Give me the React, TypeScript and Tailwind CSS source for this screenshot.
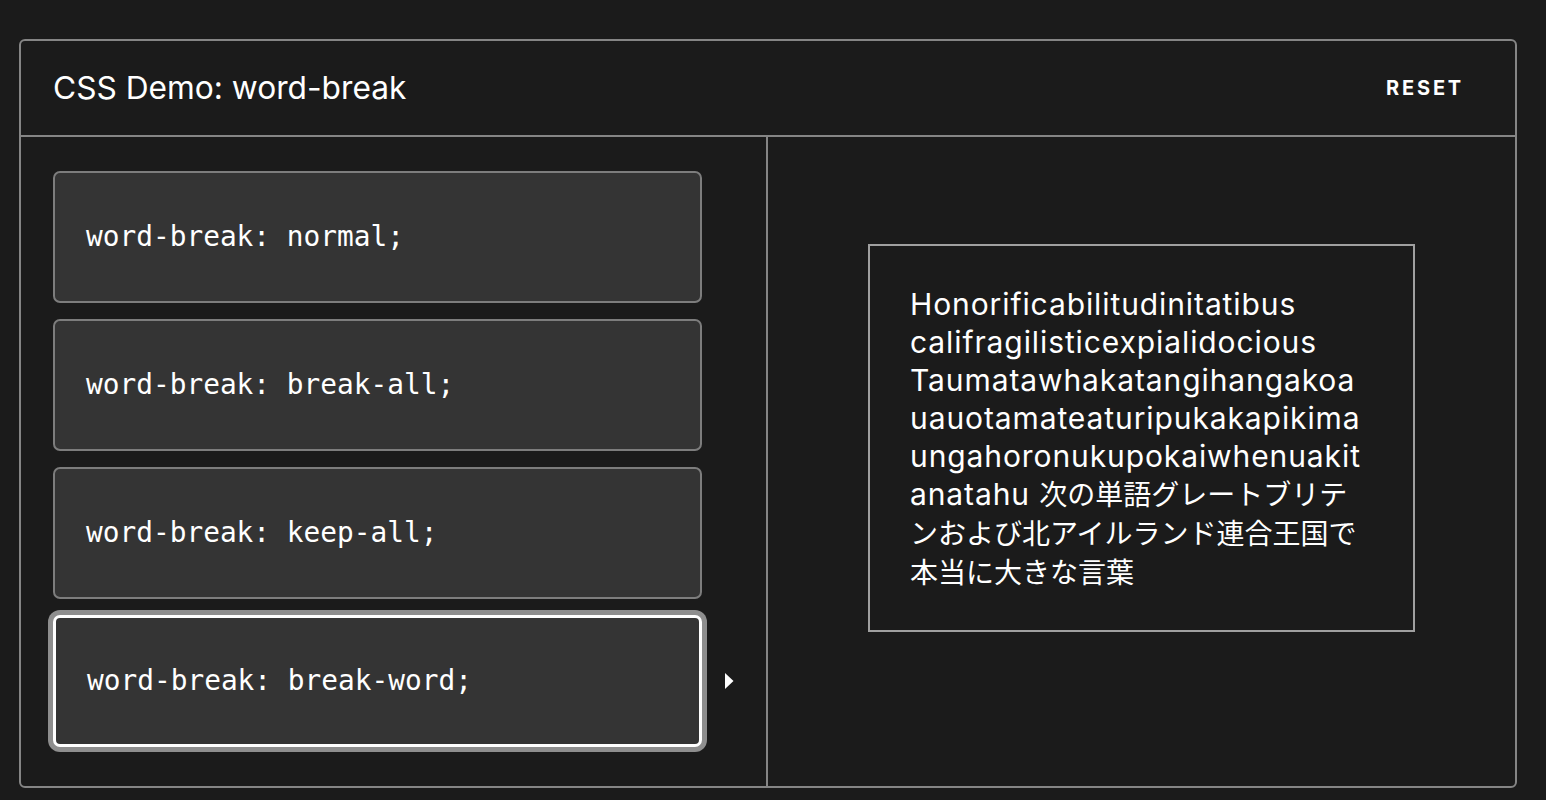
const options = [
  'word-break: normal;',
  'word-break: break-all;',
  'word-break: keep-all;',
  'word-break: break-word;',
];

const selected = 3;

export default function App() {
  return (
    <div className="min-h-[800px] bg-[#1b1b1b] pl-[19px] pt-[39px] font-['Inter','Noto_Sans_CJK_JP',sans-serif] text-white">
      <div className="w-[1498px] overflow-hidden rounded-[6px] border-2 border-[#858585]">
        {/* Header */}
        <div className="flex h-[96px] items-center justify-between border-b-2 border-[#858585] pl-[32px] pr-[51px]">
          <h1 className="text-[31.7px] leading-none">CSS Demo: word-break</h1>
          <button className="text-[20px] font-bold tracking-[0.14em]">RESET</button>
        </div>

        <div className="grid grid-cols-2">
          {/* Choices */}
          <div className="flex flex-col gap-4 border-r-2 border-[#858585] pt-[34px] pb-[39px] pl-[32px]">
            {options.map((o, i) => (
              <div key={o} className="flex items-center">
                <div
                  className={
                    i === selected
                      ? 'flex h-[132px] w-[649px] items-center rounded-[7px] border-[3px] border-white bg-[#343434] pl-[31px] shadow-[0_0_0_5px_#8e8e8e]'
                      : 'flex h-[132px] w-[649px] items-center rounded-[7px] border-2 border-[#7d7d7d] bg-[#343434] pl-[31px]'
                  }
                >
                  <code className="font-['DejaVu_Sans_Mono',monospace] text-[27.8px]">{o}</code>
                </div>
                {i === selected && (
                  <svg width="9" height="16" viewBox="0 0 9 16" className="ml-[23px]">
                    <path d="M0 0 L8.5 8 L0 16 Z" fill="white" />
                  </svg>
                )}
              </div>
            ))}
          </div>

          {/* Output */}
          <div className="flex justify-center pt-[107px]">
            <div className="h-[388px] w-[547px] border-2 border-[#a0a0a0] px-[40px] pt-[39px]">
              <p className="text-[30px] leading-[38px] tracking-[0.03em] [overflow-wrap:anywhere]">
                Honorificabilitudinitatibus califragilisticexpialidocious Taumatawhakatangihangakoauauotamateaturipukakapikimaungahoronukupokaiwhenuakitanatahu{' '}
                <span className="text-[28px] leading-[38px] tracking-normal">次の単語グレートブリテンおよび北アイルランド連合王国で本当に大きな言葉</span>
              </p>
            </div>
          </div>
        </div>
      </div>
    </div>
  );
}
